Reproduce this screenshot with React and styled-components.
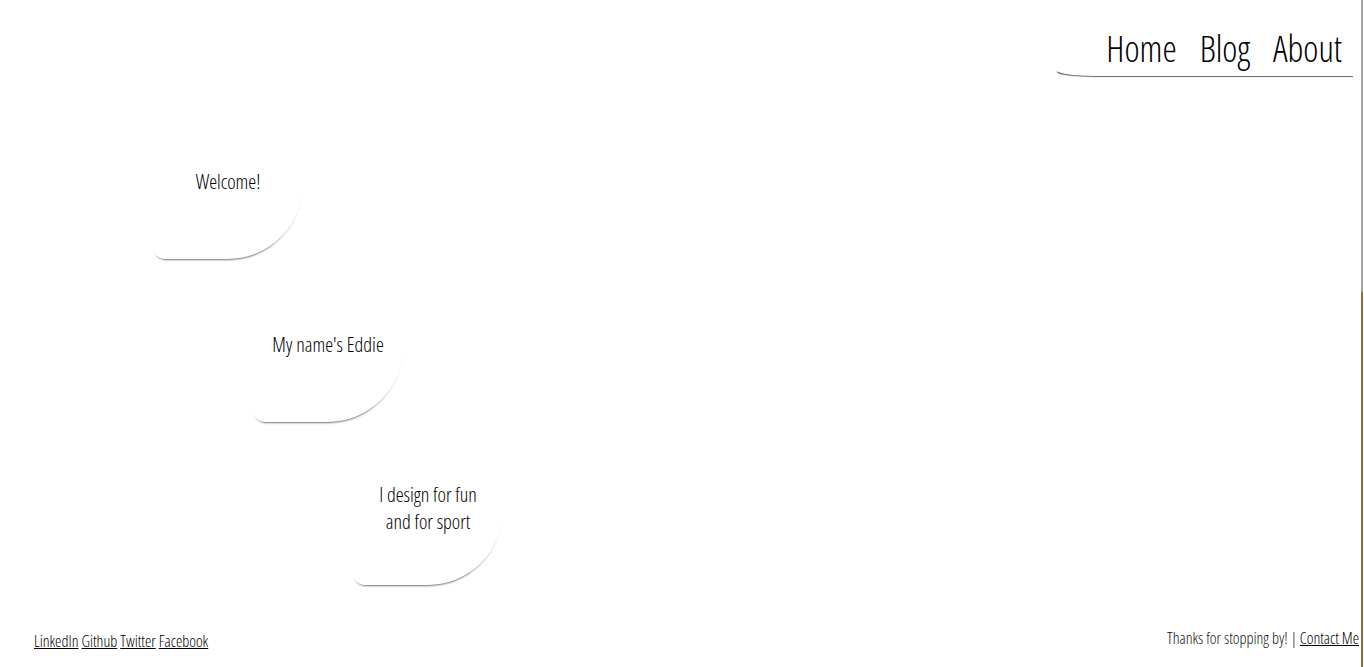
import React from "react";
import styled, { createGlobalStyle } from "styled-components";

const Global = createGlobalStyle`
  html, body { margin: 0; padding: 0; background: #fff; }
  body {
    font-family: "Open Sans", "Liberation Sans Narrow", sans-serif;
    font-stretch: 75%;
    font-weight: 300;
    color: #000;
  }
`;

const Page = styled.div`
  position: relative;
  height: 667px;
  display: flex;
  flex-direction: column;
  box-sizing: border-box;
  overflow: hidden;
`;

const EdgeStripe = styled.div`
  position: absolute;
  top: 0;
  right: 1px;
  width: 2px;
  height: 100%;
  background: linear-gradient(to bottom, #a3a3a3 0, #a3a3a3 292px, #8a6d3b 292px, #8a6d3b 100%);
`;

const Header = styled.header`
  display: flex;
  justify-content: flex-end;
  padding: 24px 10px 0 0;
`;

const Nav = styled.nav`
  display: flex;
  gap: 23px;
  padding: 0 12px 3px 50px;
  border-bottom-left-radius: 40px 6px;
  box-shadow: 0 2px 1px -1px rgba(0, 0, 0, 0.6);
`;

const NavLink = styled.a`
  font-size: 36px;
  line-height: 49px;
  color: #000;
  text-decoration: none;
`;

const Main = styled.main`
  flex: 1;
  display: flex;
  flex-direction: column;
  gap: 13px;
  padding: 33px 0 0 153px;
`;

const Bubble = styled.div`
  width: 150px;
  height: 150px;
  margin-left: ${(p) => p.$indent}px;
  display: flex;
  align-items: center;
  justify-content: center;
  text-align: center;
  box-sizing: border-box;
  padding: 0 14px 5px;
  font-size: 20px;
  line-height: 27px;
  font-weight: 330;
  color: #000;
  border-radius: 0 0 75px 12px;
  box-shadow: 0 3px 2px -2px rgba(0, 0, 0, 0.55);
  background: #fff;
`;

const Footer = styled.footer`
  display: flex;
  justify-content: space-between;
  align-items: flex-end;
  padding: 0 5px 15px 34px;
  font-size: 16px;
  line-height: 22px;
`;

const LinkList = styled.div`
  white-space: nowrap;
`;

const FootLink = styled.a`
  color: #000;
  text-decoration: underline;
`;

const Thanks = styled.div`
  margin-bottom: 3px;
  color: #111;
`;

export default function App() {
  return (
    <Page>
      <Global />
      <Header>
        <Nav>
          <NavLink href="#">Home</NavLink>
          <NavLink href="#">Blog</NavLink>
          <NavLink href="#">About</NavLink>
        </Nav>
      </Header>
      <Main>
        <Bubble $indent={0}>Welcome!</Bubble>
        <Bubble $indent={100}>My name's Eddie</Bubble>
        <Bubble $indent={200}>I design for fun and for sport</Bubble>
      </Main>
      <Footer>
        <LinkList>
          <FootLink href="#">LinkedIn</FootLink>{" "}
          <FootLink href="#">Github</FootLink>{" "}
          <FootLink href="#">Twitter</FootLink>{" "}
          <FootLink href="#">Facebook</FootLink>
        </LinkList>
        <Thanks>
          Thanks for stopping by! | <FootLink href="#">Contact Me</FootLink>
        </Thanks>
      </Footer>
      <EdgeStripe />
    </Page>
  );
}
